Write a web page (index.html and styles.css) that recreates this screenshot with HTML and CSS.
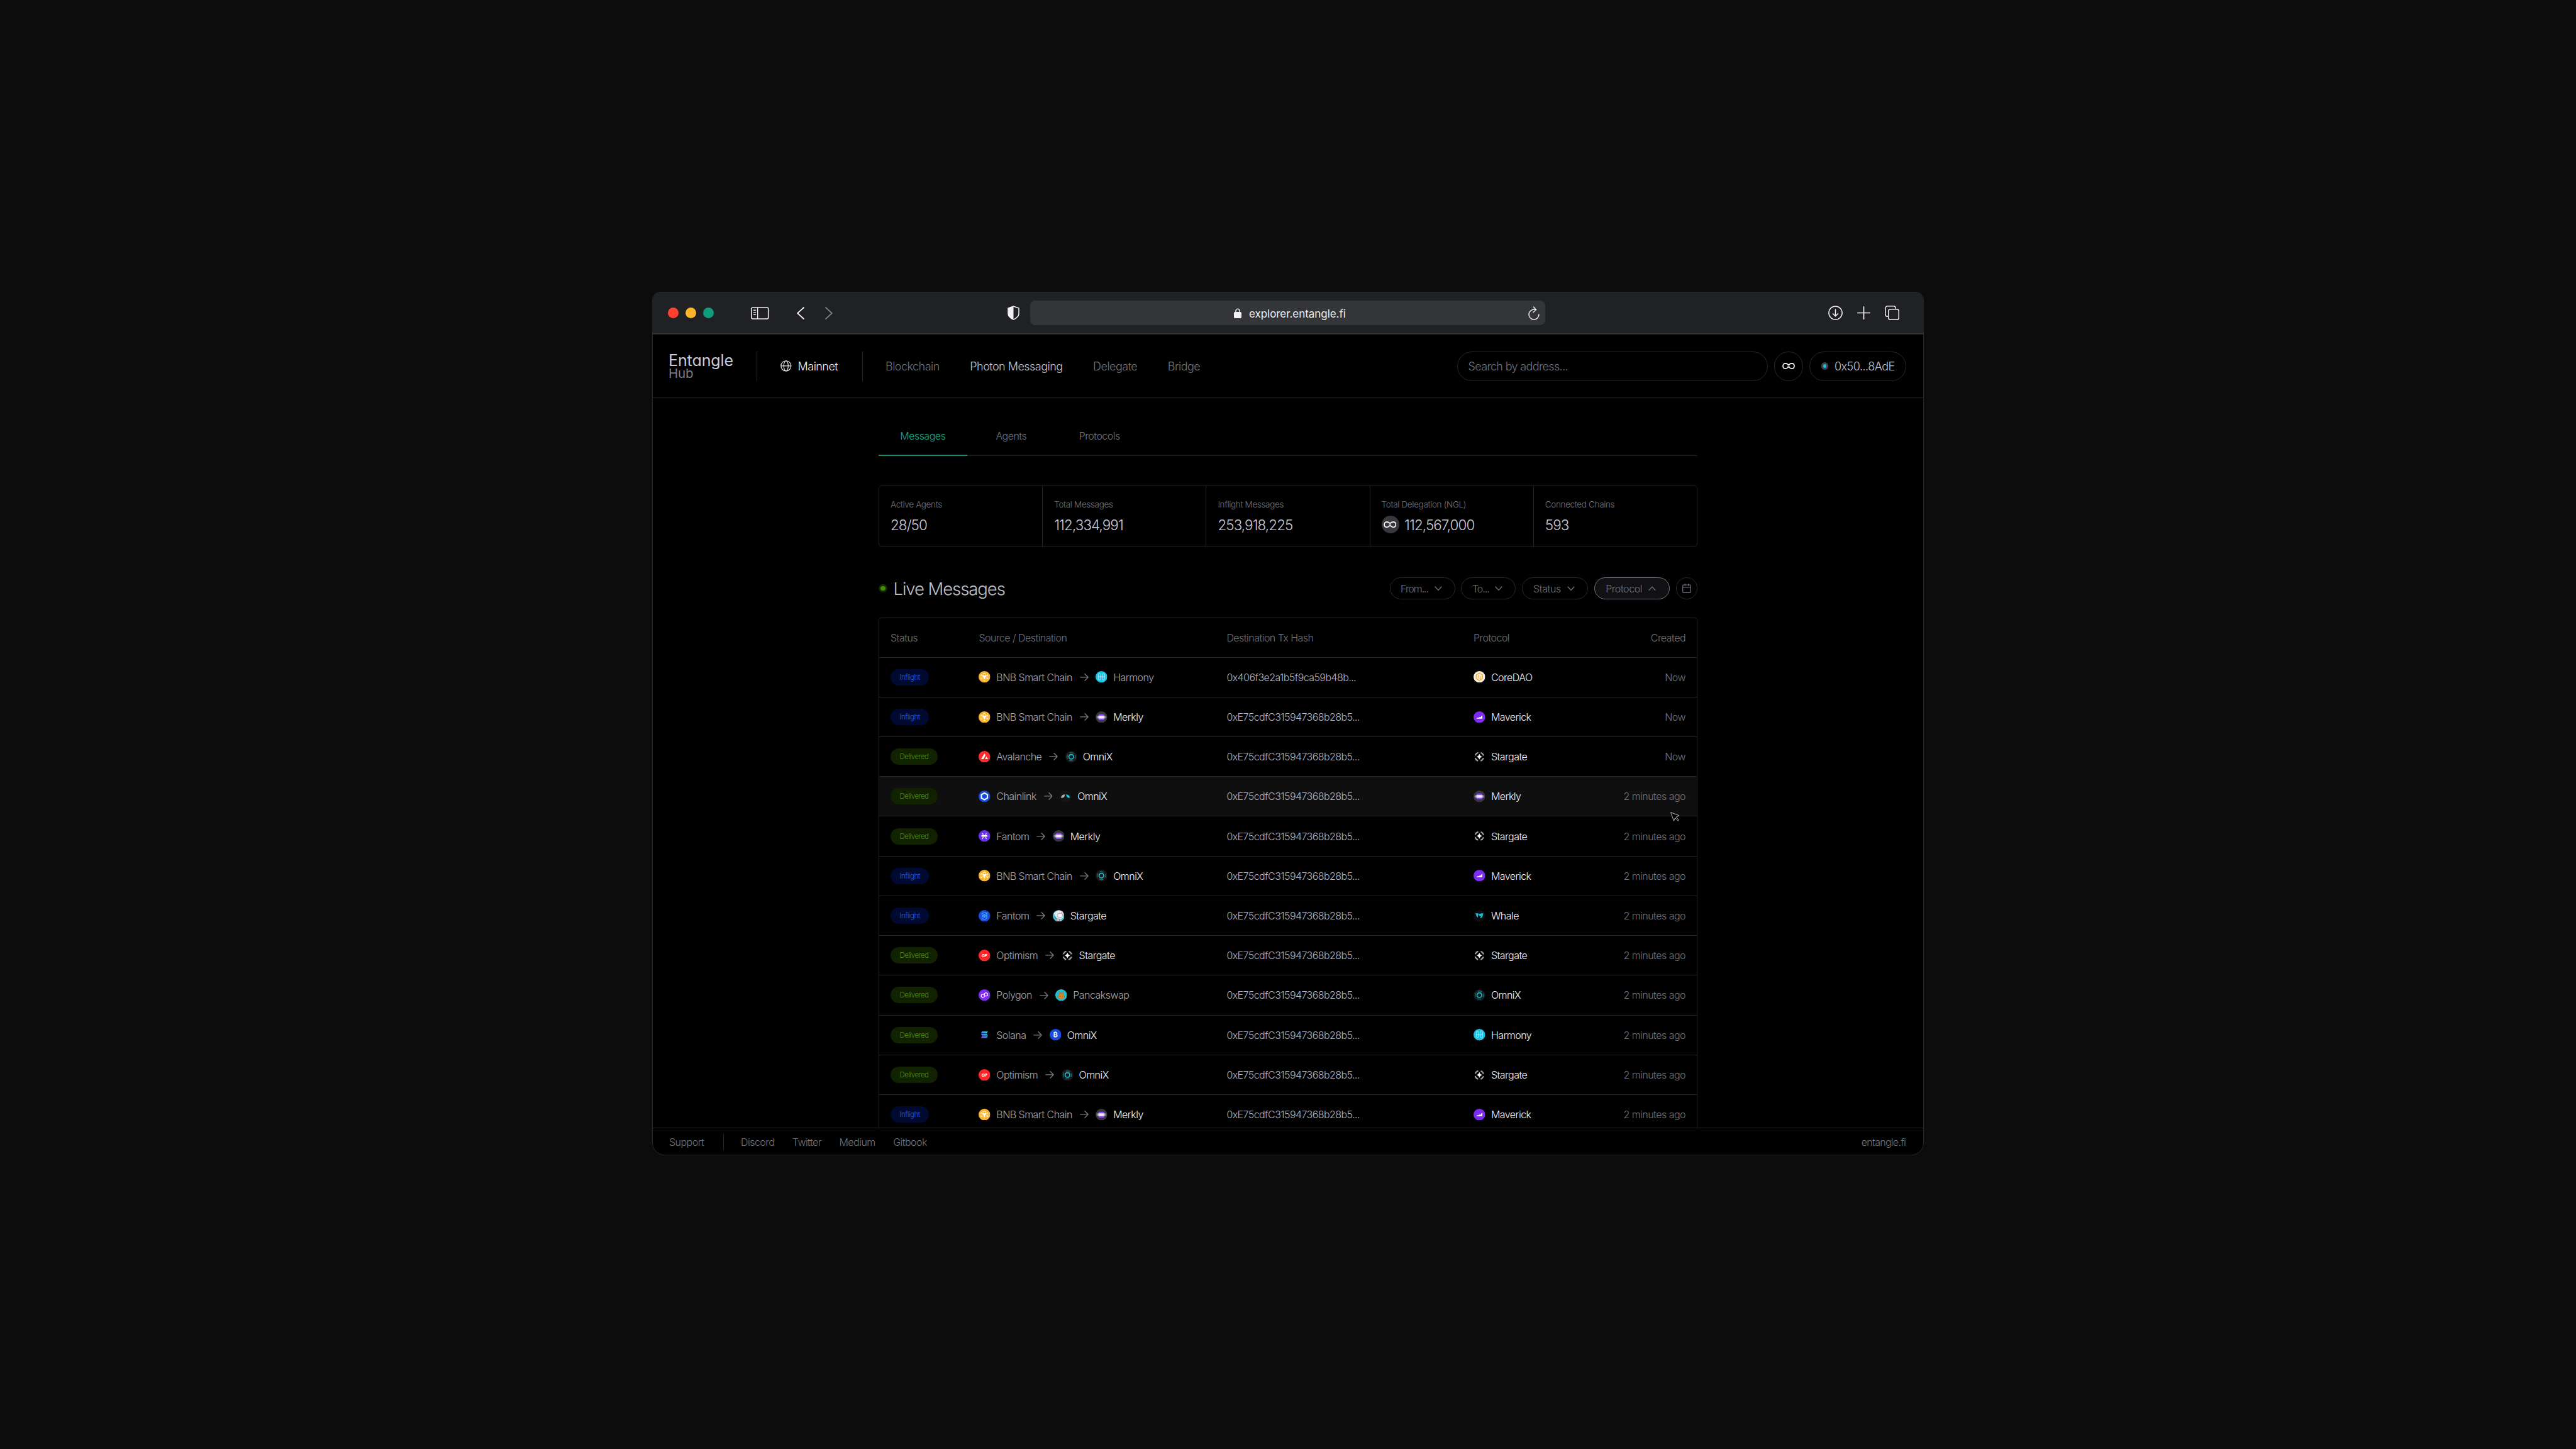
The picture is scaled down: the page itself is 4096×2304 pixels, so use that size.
FILE: index.html
```html
<!DOCTYPE html>
<html lang="en">
<head>
    <meta charset="UTF-8">
    <meta name="viewport" content="width=device-width, initial-scale=1.0">
    <title>Entangle Hub</title>
    <link rel="stylesheet" href="styles.css">
</head>
<body>

    <!-- Icon sprite -->
    <svg class="sprite" width="0" height="0">
        <defs>
            <linearGradient id="solGrad" x1="0" y1="1" x2="1" y2="0">
                <stop offset="0" stop-color="#8f35ff"/>
                <stop offset="0.5" stop-color="#3f95ea"/>
                <stop offset="1" stop-color="#14dcc0"/>
            </linearGradient>
            <linearGradient id="merklyGrad" x1="0" y1="0" x2="1" y2="0">
                <stop offset="0" stop-color="#fff" stop-opacity="0.15"/>
                <stop offset="0.35" stop-color="#fff" stop-opacity="0.9"/>
                <stop offset="0.65" stop-color="#fff" stop-opacity="0.9"/>
                <stop offset="1" stop-color="#fff" stop-opacity="0.15"/>
            </linearGradient>
        </defs>
        <symbol id="bnb" viewBox="0 0 30 30">
            <circle cx="15" cy="15" r="15" fill="#fbb42a"/>
            <g fill="none" stroke="#fff" stroke-width="1.7">
                <path d="M11 8l4-2.3L19 8M21 9.3l2.6 1.5v3M23.6 16.5v3L21 21M9 9.3l-2.6 1.5v3M6.4 16.5v3L9 21M12.5 22.8l2.5 1.3 2.5-1.3"/>
                <path d="M10 18.5v-2M20 18.5v-2"/>
            </g>
            <path d="M9.5 11.2l2.3-1.2 3.2 2 3.2-2 2.3 1.2v2.6L17 16v4l-2 1.2L13 20v-4l-3.5-2.2z" fill="#fff"/>
        </symbol>
        <symbol id="harmony" viewBox="0 0 30 30">
            <circle cx="15" cy="15" r="15" fill="#18c3e6"/>
            <g fill="none" stroke="#e6fbff" stroke-width="1.1">
                <rect x="7" y="6.5" width="6" height="16.5" rx="3"/>
                <rect x="17" y="6.5" width="6" height="16.5" rx="3"/>
                <path d="M7 15.5c5-2 10 .5 16-1.5"/>
            </g>
        </symbol>
        <symbol id="merkly" viewBox="0 0 30 30">
            <circle cx="15" cy="15" r="15" fill="#37373d"/>
            <rect x="7.5" y="7.5" width="15" height="15" rx="2.5" fill="#8a4df5"/>
            <rect x="2" y="11.5" width="26" height="7" rx="3.5" fill="url(#merklyGrad)"/>
        </symbol>
        <symbol id="omnix" viewBox="0 0 30 30">
            <circle cx="15" cy="15" r="15" fill="#19191d"/>
            <circle cx="15" cy="15" r="10.4" fill="none" stroke="#1a9c80" stroke-width="1.5" stroke-dasharray="10.3 6.04" stroke-dashoffset="5.15"/>
            <circle cx="15" cy="15" r="6" fill="none" stroke="#17c0d8" stroke-width="2.6"/>
        </symbol>
        <symbol id="omnixWing" viewBox="0 0 30 30">
            <circle cx="15" cy="15" r="15" fill="#151517"/>
            <path d="M3 18.5c1-5.5 4.5-8.5 10.5-8.5-.5 5-3 8.5-6 8.5z" fill="#a9b8ac"/>
            <path d="M15.5 10c6 0 10 3 11 8.5h-5c-3.5-1-3-5-6-8.5z" fill="#17c8dc"/>
        </symbol>
        <symbol id="avalanche" viewBox="0 0 30 30">
            <circle cx="15" cy="15" r="15" fill="#ff2a2c"/>
            <path d="M15.2 6.5l2.6 4.2-5.3 10.3H6.5zM20.2 14.3l3.8 6.7h-7.4z" fill="#fff"/>
        </symbol>
        <symbol id="chainlink" viewBox="0 0 30 30">
            <circle cx="15" cy="15" r="15" fill="#184bdf"/>
            <path d="M15 6.3l7.8 4.4v8.6L15 23.7l-7.8-4.4v-8.6z" fill="none" stroke="#fff" stroke-width="3.2"/>
        </symbol>
        <symbol id="fantomX" viewBox="0 0 30 30">
            <circle cx="15" cy="15" r="15" fill="#6a2ff0"/>
            <path d="M7.5 13.7h15M7.5 16.7h15M9.8 7.5l2.5 5M20.2 7.5l-2.5 5M12.3 17.5l-2.5 5M17.7 17.5l2.5 5" fill="none" stroke="#fff" stroke-width="1.9"/>
        </symbol>
        <symbol id="fantom" viewBox="0 0 30 30">
            <circle cx="15" cy="15" r="15" fill="#184bdf"/>
            <path d="M9 8.5l6-3.3 6 3.3v13l-6 3.3-6-3.3zM9 8.5l6 3.5 6-3.5M9 15.5l6-3.5 6 3.5-6 3.3zM15 12v6.8M7 23l3 1M21 8l2-1" fill="none" stroke="#5fd2f5" stroke-width="1.2"/>
        </symbol>
        <symbol id="astronaut" viewBox="0 0 30 30">
            <circle cx="15" cy="15" r="15" fill="#3fc3da"/>
            <path d="M3 9a15 15 0 0 1 22-5l2 8-1 8-6 3-9-2-5-4z" fill="#e9e9ec"/>
            <path d="M12 12c3-4 9-4 13-2v7c-3 3-9 3-12 1z" fill="#f8f8fa" stroke="#9a9aa5" stroke-width="1.4"/>
            <path d="M8 28a15 15 0 0 0 15-1l-2-4-11-1z" fill="#b9bac4"/>
            <path d="M23.5 5v4M11 24.5l-1 3" stroke="#ff3b36" stroke-width="1.4"/>
            <path d="M4 17l4 1M6 20l4 2M17 24v3" stroke="#5f6069" stroke-width="1.3"/>
        </symbol>
        <symbol id="optimism" viewBox="0 0 30 30">
            <circle cx="15" cy="15" r="15" fill="#ff2528"/>
            <text x="14.7" y="18.8" class="op-text" text-anchor="middle">OP</text>
        </symbol>
        <symbol id="stargate" viewBox="0 0 30 30">
            <circle cx="15" cy="15" r="11" fill="none" stroke="#a2a3ad" stroke-width="3.2" stroke-dasharray="10.8 6.48" stroke-dashoffset="-3.24"/>
            <path d="M15 8.5c1 3.5 3 5.5 6.5 6.5-3.5 1-5.5 3-6.5 6.5-1-3.5-3-5.5-6.5-6.5 3.5-1 5.5-3 6.5-6.5z" fill="#fff" stroke="#fff"/>
        </symbol>
        <symbol id="polygon" viewBox="0 0 30 30">
            <circle cx="15" cy="15" r="15" fill="#7f2bf6"/>
            <path d="M15 12.5v6.5l-4 2.3-4-2.3v-4.5l4-2.3 2.5 1.4M15 17.5V11l4-2.3 4 2.3v4.5l-4 2.3-2.5-1.4" fill="none" stroke="#fff" stroke-width="1.9"/>
        </symbol>
        <symbol id="pancake" viewBox="0 0 30 30">
            <circle cx="15" cy="15" r="15" fill="#18c3dc"/>
            <path d="M10.5 13.5C9 9 9 5.5 11 5.5s3 3 3 6.5h2c0-3.5 1-6.5 3-6.5s2 3.5.5 8c3 1.5 4 3.5 4 6 0 3.5-4 5.5-8.5 5.5s-8.5-2-8.5-5.5c0-2.5 1-4.5 4-6z" fill="#d88a2c" stroke="#7c5b3b" stroke-width=".8"/>
            <path d="M12 16.5v2.5M18 16.5v2.5" stroke="#6b4126" stroke-width="1.5"/>
        </symbol>
        <symbol id="solana" viewBox="0 0 30 30">
            <path d="M9 6.5H24l-3 4.8H6zM6 12.6h15l3 4.8H9zM9 18.6H24l-3 4.8H6z" fill="url(#solGrad)"/>
        </symbol>
        <symbol id="bitcoin" viewBox="0 0 30 30">
            <circle cx="15" cy="15" r="15" fill="#184bdf"/>
            <text x="15" y="21.3" class="btc-text" text-anchor="middle">₿</text>
        </symbol>
        <symbol id="coredao" viewBox="0 0 30 30">
            <circle cx="15" cy="15" r="15" fill="#f6f0e6"/>
            <path d="M15 5.3l8 4.6v9.6l-8 5-8-5V9.9z" fill="none" stroke="#fbaf2c" stroke-width="2.4"/>
            <path d="M12 19v-6.5l3-1.7M18.5 13.5v5.5l-3.5 2" fill="none" stroke="#fbb94a" stroke-width="1.9"/>
        </symbol>
        <symbol id="maverick" viewBox="0 0 30 30">
            <circle cx="15" cy="15" r="15" fill="#7f2bf6"/>
            <path d="M7 18.8l3-2.3h3.5l1.8-1.7 3.2.2 2.3-3.8 1.9-1.2v8.8z" fill="#fff"/>
        </symbol>
        <symbol id="whale" viewBox="0 0 30 30">
            <circle cx="15" cy="15" r="15" fill="#0b0c0d"/>
            <path d="M5 8.5h6.5l1.5 4.5-2 1.5 1 5-3.5-2zM13 8.5l3.5 2 3-2H25l-2 7.5c-1.5 4-4 5-6.5 4.500l2.500-4.500-4-1z" fill="#18c0d6"/>
        </symbol>
        <symbol id="arrow" viewBox="0 0 20 20">
            <path d="M.5 10h18M11 1.8l8 8.2-8 8.2" fill="none" stroke="currentColor" stroke-width="2"/>
        </symbol>
        <symbol id="chevron" viewBox="0 0 16 10">
            <path d="M1 1l7 7.5L15 1" fill="none" stroke="currentColor" stroke-width="1.7"/>
        </symbol>
        <symbol id="loop" viewBox="0 0 40 20">
            <path d="M20 6.5C17.5 4.5 15 1.8 10.5 1.8 5 1.8 2 5 2 10s3 8.2 8.5 8.2c4.5 0 6.5-4.7 9.5-4.7s5 4.7 9.5 4.7C35 18.2 38 15 38 10s-3-8.2-8.5-8.2C25 1.8 22.5 4.5 20 6.5z" fill="none" stroke="#fff" stroke-width="3.2"/>
            <path d="M16.5 10.2h7" stroke="#fff" stroke-width="2"/>
        </symbol>
    </svg>

    <div class="window">

        <!-- Browser bar -->
        <div class="browser-bar">
            <div class="bar-left">
                <div class="dots">
                    <span class="dot red"></span>
                    <span class="dot yellow"></span>
                    <span class="dot green"></span>
                </div>
                <svg class="sidebar-icon" viewBox="0 0 29 20" fill="none" stroke="#f0eff2">
                    <rect x=".9" y=".9" width="27.2" height="18.2" rx="2.2" stroke-width="1.6"/>
                    <path d="M10.8 1v18" stroke-width="1.4"/>
                    <path d="M4 5.2h4M4 8.6h4M4 12h4" stroke-width="1.5"/>
                </svg>
                <svg class="nav-back" viewBox="0 0 12 20" fill="none" stroke="#f5f5f7" stroke-width="1.8" stroke-linecap="round" stroke-linejoin="round"><path d="M11 1L1.2 10 11 19"/></svg>
                <svg class="nav-forward" viewBox="0 0 12 20" fill="none" stroke="#7b7c85" stroke-width="1.8" stroke-linecap="round" stroke-linejoin="round"><path d="M1 1l9.8 9L1 19"/></svg>
                <svg class="shield" viewBox="0 0 19 23">
                    <path d="M9.5 1L18 4v9c0 4.5-4 7-8.5 9.2C5 20 1 17.5 1 13V4z" fill="none" stroke="#f0eff2" stroke-width="1.5"/>
                    <path d="M9.5 1L1 4v9c0 4.5 4 7 8.5 9.2z" fill="#f0eff2"/>
                </svg>
            </div>
            <div class="address">
                <svg class="lock" viewBox="0 0 12 16">
                    <path d="M3 7V4.3a3 3.2 0 0 1 6 0V7" fill="none" stroke="#f0eff2" stroke-width="1.4"/>
                    <rect x="0" y="6" width="12" height="10" rx="1.8" fill="#f0eff2"/>
                </svg>
                <span>explorer.entangle.fi</span>
                <svg class="reload" viewBox="0 0 18 22" fill="none" stroke="#f0eff2" stroke-width="1.5" stroke-linecap="round">
                    <path d="M12.3 5.5C6 3.8 1 8 1 13a8 8 0 0 0 16 0M8.5 1l4 4.5-4.5 4"/>
                </svg>
            </div>
            <div class="bar-right">
                <svg class="bar-icon" viewBox="0 0 23 23" fill="none" stroke="#f0eff2" stroke-width="1.5" stroke-linecap="round">
                    <circle cx="11.5" cy="11.5" r="10.6"/>
                    <path d="M11.5 6v10.5M7.5 12.7l4 4 4-4"/>
                </svg>
                <svg class="bar-icon" viewBox="0 0 23 23" fill="none" stroke="#f0eff2" stroke-width="1.7" stroke-linecap="round">
                    <path d="M11.5 1.8v19.4M1.8 11.5h19.4"/>
                </svg>
                <svg class="bar-icon" viewBox="0 0 23 23" fill="none" stroke="#f0eff2" stroke-width="1.5">
                    <path d="M5.5 17.3H4a3 3 0 0 1-3-3V3.8a3 3 0 0 1 3-3h10a3 3 0 0 1 3 3v1.7"/>
                    <rect x="5.8" y="5.8" width="16.4" height="16.4" rx="2.8"/>
                </svg>
            </div>
        </div>

        <!-- App header -->
        <header class="header">
            <div class="logo">
                <div class="logo-name">Entangle</div>
                <div class="logo-sub">Hub</div>
            </div>
            <div class="network">
                <svg class="globe" viewBox="0 0 18 18" fill="none" stroke="#f0f0f5" stroke-width="1.2">
                    <circle cx="9" cy="9" r="8.2"/>
                    <ellipse cx="9" cy="9" rx="3.6" ry="8.2"/>
                    <path d="M1 9h16"/>
                </svg>
                <span>Mainnet</span>
            </div>
            <nav class="nav">
                <a>Blockchain</a>
                <a class="current">Photon Messaging</a>
                <a>Delegate</a>
                <a>Bridge</a>
            </nav>
            <div class="header-right">
                <div class="search">Search by address...</div>
                <div class="token"><svg><use href="#loop"/></svg></div>
                <div class="wallet"><span class="wallet-dot"></span>0x50...8AdE</div>
            </div>
        </header>

        <main class="content">
            <div class="tabs">
                <div class="tab active">Messages</div>
                <div class="tab">Agents</div>
                <div class="tab">Protocols</div>
            </div>

            <div class="stats">
                <div class="stat">
                    <div class="label">Active Agents</div>
                    <div class="value">28/50</div>
                </div>
                <div class="stat">
                    <div class="label">Total Messages</div>
                    <div class="value">112,334,991</div>
                </div>
                <div class="stat">
                    <div class="label">Inflight Messages</div>
                    <div class="value">253,918,225</div>
                </div>
                <div class="stat">
                    <div class="label">Total Delegation (NGL)</div>
                    <div class="value"><span class="coin"><svg><use href="#loop"/></svg></span>112,567,000</div>
                </div>
                <div class="stat">
                    <div class="label">Connected Chains</div>
                    <div class="value">593</div>
                </div>
            </div>

            <div class="live">
                <span class="live-dot"></span>
                <h1>Live Messages</h1>
                <div class="filters">
                    <div class="filter tight">From...<svg class="chevron"><use href="#chevron"/></svg></div>
                    <div class="filter tight">To...<svg class="chevron"><use href="#chevron"/></svg></div>
                    <div class="filter">Status<svg class="chevron"><use href="#chevron"/></svg></div>
                    <div class="filter open">Protocol<svg class="chevron"><use href="#chevron"/></svg></div>
                    <div class="calendar">
                        <svg viewBox="0 0 14 15" fill="none" stroke="currentColor" stroke-width="1.2">
                            <rect x=".7" y="2" width="12.6" height="12.3" rx="1.2"/>
                            <path d="M.7 6h12.6M4.2 0v3.8M9.8 0v3.8"/>
                        </svg>
                    </div>
                </div>
            </div>

            <div class="table">
                <div class="row head">
                    <div>Status</div>
                    <div>Source / Destination</div>
                    <div>Destination Tx Hash</div>
                    <div>Protocol</div>
                    <div class="time">Created</div>
                </div>
                <div class="row">
                    <div><span class="badge inflight">Inflight</span></div>
                    <div class="route"><svg class="coin-icon"><use href="#bnb"/></svg>BNB Smart Chain<svg class="arrow"><use href="#arrow"/></svg><svg class="coin-icon"><use href="#harmony"/></svg>Harmony</div>
                    <div class="hash">0x406f3e2a1b5f9ca59b48b...</div>
                    <div class="protocol"><svg class="coin-icon"><use href="#coredao"/></svg>CoreDAO</div>
                    <div class="time">Now</div>
                </div>
                <div class="row">
                    <div><span class="badge inflight">Inflight</span></div>
                    <div class="route"><svg class="coin-icon"><use href="#bnb"/></svg>BNB Smart Chain<svg class="arrow"><use href="#arrow"/></svg><svg class="coin-icon"><use href="#merkly"/></svg><b>Merkly</b></div>
                    <div class="hash">0xE75cdfC315947368b28b5...</div>
                    <div class="protocol"><svg class="coin-icon"><use href="#maverick"/></svg>Maverick</div>
                    <div class="time">Now</div>
                </div>
                <div class="row">
                    <div><span class="badge delivered">Delivered</span></div>
                    <div class="route"><svg class="coin-icon"><use href="#avalanche"/></svg>Avalanche<svg class="arrow"><use href="#arrow"/></svg><svg class="coin-icon"><use href="#omnix"/></svg><b>OmniX</b></div>
                    <div class="hash">0xE75cdfC315947368b28b5...</div>
                    <div class="protocol"><svg class="coin-icon"><use href="#stargate"/></svg>Stargate</div>
                    <div class="time">Now</div>
                </div>
                <div class="row hovered">
                    <div><span class="badge delivered">Delivered</span></div>
                    <div class="route"><svg class="coin-icon"><use href="#chainlink"/></svg>Chainlink<svg class="arrow"><use href="#arrow"/></svg><svg class="coin-icon"><use href="#omnixWing"/></svg><b>OmniX</b></div>
                    <div class="hash">0xE75cdfC315947368b28b5...</div>
                    <div class="protocol"><svg class="coin-icon"><use href="#merkly"/></svg>Merkly</div>
                    <div class="time">2 minutes ago</div>
                    <svg class="cursor" viewBox="0 0 15 15"><path d="M.7.7l13.4 5.2-5 2.3 4.6 4.7-1.3 1.3-4.7-4.6-2.3 4.7z" fill="#000" stroke="#b9bac4" stroke-width="1" stroke-linejoin="round"/></svg>
                </div>
                <div class="row">
                    <div><span class="badge delivered">Delivered</span></div>
                    <div class="route"><svg class="coin-icon"><use href="#fantomX"/></svg>Fantom<svg class="arrow"><use href="#arrow"/></svg><svg class="coin-icon"><use href="#merkly"/></svg><b>Merkly</b></div>
                    <div class="hash">0xE75cdfC315947368b28b5...</div>
                    <div class="protocol"><svg class="coin-icon"><use href="#stargate"/></svg>Stargate</div>
                    <div class="time">2 minutes ago</div>
                </div>
                <div class="row">
                    <div><span class="badge inflight">Inflight</span></div>
                    <div class="route"><svg class="coin-icon"><use href="#bnb"/></svg>BNB Smart Chain<svg class="arrow"><use href="#arrow"/></svg><svg class="coin-icon"><use href="#omnix"/></svg><b>OmniX</b></div>
                    <div class="hash">0xE75cdfC315947368b28b5...</div>
                    <div class="protocol"><svg class="coin-icon"><use href="#maverick"/></svg>Maverick</div>
                    <div class="time">2 minutes ago</div>
                </div>
                <div class="row">
                    <div><span class="badge inflight">Inflight</span></div>
                    <div class="route"><svg class="coin-icon"><use href="#fantom"/></svg>Fantom<svg class="arrow"><use href="#arrow"/></svg><svg class="coin-icon"><use href="#astronaut"/></svg><b>Stargate</b></div>
                    <div class="hash">0xE75cdfC315947368b28b5...</div>
                    <div class="protocol"><svg class="coin-icon"><use href="#whale"/></svg>Whale</div>
                    <div class="time">2 minutes ago</div>
                </div>
                <div class="row">
                    <div><span class="badge delivered">Delivered</span></div>
                    <div class="route"><svg class="coin-icon"><use href="#optimism"/></svg>Optimism<svg class="arrow"><use href="#arrow"/></svg><svg class="coin-icon"><use href="#stargate"/></svg><b>Stargate</b></div>
                    <div class="hash">0xE75cdfC315947368b28b5...</div>
                    <div class="protocol"><svg class="coin-icon"><use href="#stargate"/></svg>Stargate</div>
                    <div class="time">2 minutes ago</div>
                </div>
                <div class="row">
                    <div><span class="badge delivered">Delivered</span></div>
                    <div class="route"><svg class="coin-icon"><use href="#polygon"/></svg>Polygon<svg class="arrow"><use href="#arrow"/></svg><svg class="coin-icon"><use href="#pancake"/></svg>Pancakswap</div>
                    <div class="hash">0xE75cdfC315947368b28b5...</div>
                    <div class="protocol"><svg class="coin-icon"><use href="#omnix"/></svg>OmniX</div>
                    <div class="time">2 minutes ago</div>
                </div>
                <div class="row">
                    <div><span class="badge delivered">Delivered</span></div>
                    <div class="route"><svg class="coin-icon"><use href="#solana"/></svg>Solana<svg class="arrow"><use href="#arrow"/></svg><svg class="coin-icon"><use href="#bitcoin"/></svg><b>OmniX</b></div>
                    <div class="hash">0xE75cdfC315947368b28b5...</div>
                    <div class="protocol"><svg class="coin-icon"><use href="#harmony"/></svg>Harmony</div>
                    <div class="time">2 minutes ago</div>
                </div>
                <div class="row">
                    <div><span class="badge delivered">Delivered</span></div>
                    <div class="route"><svg class="coin-icon"><use href="#optimism"/></svg>Optimism<svg class="arrow"><use href="#arrow"/></svg><svg class="coin-icon"><use href="#omnix"/></svg><b>OmniX</b></div>
                    <div class="hash">0xE75cdfC315947368b28b5...</div>
                    <div class="protocol"><svg class="coin-icon"><use href="#stargate"/></svg>Stargate</div>
                    <div class="time">2 minutes ago</div>
                </div>
                <div class="row">
                    <div><span class="badge inflight">Inflight</span></div>
                    <div class="route"><svg class="coin-icon"><use href="#bnb"/></svg>BNB Smart Chain<svg class="arrow"><use href="#arrow"/></svg><svg class="coin-icon"><use href="#merkly"/></svg><b>Merkly</b></div>
                    <div class="hash">0xE75cdfC315947368b28b5...</div>
                    <div class="protocol"><svg class="coin-icon"><use href="#maverick"/></svg>Maverick</div>
                    <div class="time">2 minutes ago</div>
                </div>
            </div>
        </main>

        <footer class="footer">
            <div class="support">Support</div>
            <div class="links">
                <a>Discord</a>
                <a>Twitter</a>
                <a>Medium</a>
                <a>Gitbook</a>
            </div>
            <div class="site">entangle.fi</div>
        </footer>
    </div>

</body>
</html>
```
FILE: styles.css
```css
* {
    box-sizing: border-box;
}

body {
    margin: 0;
    padding-top: 464px;
    height: 2304px;
    display: flex;
    justify-content: center;
    align-items: flex-start;
    overflow: hidden;
    background-color: #0c0c0c;
    font-family: Inter, "Liberation Sans", sans-serif;
    font-weight: 300;
    font-size: 16px;
    letter-spacing: -0.033em;
    color: #72747f;
    white-space: nowrap;
}

.sprite {
    position: absolute;
}

svg {
    display: block;
    flex: none;
}

b {
    font-weight: 300;
}

.window {
    width: 2022px;
    height: 1373px;
    display: flex;
    flex-direction: column;
    overflow: hidden;
    border: 1px solid #26272b;
    border-radius: 12px 12px 20px 20px;
    background-color: #000;
}

/* Browser bar */
.browser-bar {
    flex: none;
    height: 67px;
    display: flex;
    align-items: center;
    padding-bottom: 1px;
    background-color: #202125;
    border-bottom: 1px solid #202125;
    box-shadow: inset 0 -1px #3a3b40;
}

.bar-left, .bar-right {
    display: flex;
    align-items: center;
}

.bar-left {
    width: 600px;
    padding-left: 24px;
}

.dots {
    display: flex;
    gap: 10.8px;
}

.dot {
    width: 17.3px;
    height: 17.3px;
    border-radius: 50%;
}

.red { background-color: #ff4030; }
.yellow { background-color: #fdb62b; }
.green { background-color: #109c7a; }

.sidebar-icon {
    width: 28.6px;
    height: 20px;
    margin-left: 58.5px;
}

.nav-back {
    width: 12px;
    height: 20px;
    margin-left: 44.5px;
}

.nav-forward {
    width: 12px;
    height: 20px;
    margin-left: 33px;
}

.shield {
    width: 19px;
    height: 23px;
    margin-left: auto;
    margin-right: 17px;
}

.address {
    width: 819px;
    height: 39.5px;
    display: flex;
    align-items: center;
    padding: 0 9px 0 324px;
    border-radius: 8px;
    background-color: #343539;
    color: #f0eff2;
    font-weight: 400;
    font-size: 17px;
    letter-spacing: -0.003em;
}

.address span {
    padding-top: 3px;
}

.lock {
    width: 12px;
    height: 16px;
    margin-right: 12px;
}

.reload {
    width: 18px;
    height: 22px;
    margin-left: auto;
}

.bar-right {
    flex: 1;
    justify-content: flex-end;
    gap: 22px;
    padding-right: 38px;
}

.bar-icon {
    width: 23px;
    height: 23px;
}

/* Header */
.header {
    flex: none;
    height: 101px;
    display: flex;
    align-items: center;
    padding: 0 27px 0 25px;
    border-bottom: 1px solid #212125;
    font-size: 18px;
}

.logo {
    width: 141px;
    height: 47px;
    border-right: 1px solid #26262a;
    font-weight: 400;
    font-feature-settings: "cv11";
}

.logo-name {
    font-size: 25px;
    line-height: 28px;
    letter-spacing: -0.004em;
    color: #c9cad7;
}

.logo-sub {
    margin-top: -4px;
    font-size: 20.5px;
    line-height: 22px;
    letter-spacing: -0.01em;
    color: #7d7e89;
}

.network {
    width: 167.5px;
    height: 47px;
    display: flex;
    align-items: center;
    gap: 10px;
    padding-left: 37px;
    border-right: 1px solid #26262a;
    color: #f5f5fa;
}

.globe {
    width: 17.6px;
    height: 17.6px;
}

.nav {
    display: flex;
    gap: 48.5px;
    padding-left: 36.5px;
}

.current {
    color: #c6c7d3;
}

.header-right {
    display: flex;
    gap: 10px;
    margin-left: auto;
}

.search, .token, .wallet {
    height: 47px;
    display: flex;
    align-items: center;
    border: 1px solid #27282c;
    border-radius: 24px;
}

.search {
    width: 494px;
    padding-left: 17px;
    letter-spacing: -0.036em;
}

.token {
    width: 46.5px;
    justify-content: center;
}

.token svg {
    width: 20px;
    height: 10px;
}

.wallet {
    width: 154px;
    gap: 10px;
    padding-left: 17.5px;
    color: #c0c1cd;
}

.wallet-dot {
    width: 11.5px;
    height: 11.5px;
    border: 3px solid #3c4146;
    border-radius: 50%;
    background-color: #17c2e2;
}

/* Content */
.content {
    flex: 1;
    min-height: 0;
    width: 1302px;
    margin: 0 auto;
    overflow: hidden;
}

.tabs {
    height: 63px;
    display: flex;
    margin-top: 29px;
    border-bottom: 1px solid #212125;
}

.tab {
    width: 140.5px;
    height: 63px;
    display: flex;
    align-items: center;
    justify-content: center;
    border-bottom: 2px solid transparent;
}

.tab.active {
    color: #16ad8a;
    border-color: #158a72;
}

.stats {
    height: 98px;
    display: flex;
    margin-top: 47px;
    border: 1px solid #232327;
    border-radius: 5px;
}

.stat {
    flex: 1;
    padding: 21px 0 0 18px;
    border-left: 1px solid #232327;
}

.stat:first-child {
    border-left: none;
}

.label {
    font-size: 13.5px;
    line-height: 16px;
    letter-spacing: -0.026em;
}

.value {
    display: flex;
    align-items: center;
    height: 28px;
    margin-top: 10px;
    font-size: 22.4px;
    letter-spacing: -0.04em;
    color: #c8c9d6;
}

.coin {
    width: 28px;
    height: 28px;
    display: flex;
    align-items: center;
    justify-content: center;
    margin-right: 8.5px;
    border-radius: 50%;
    background-color: #37383d;
}

.coin svg {
    width: 20.5px;
    height: 10.2px;
}

.live {
    display: flex;
    align-items: center;
    margin-top: 48px;
    height: 35px;
}

.live-dot {
    width: 13.5px;
    height: 13.5px;
    border: 3px solid #142a02;
    border-radius: 50%;
    background-color: #438c0a;
}

h1 {
    margin: 0 0 0 10px;
    font-weight: 300;
    font-size: 27.5px;
    letter-spacing: -0.039em;
    color: #bfc0cc;
}

.filters {
    display: flex;
    gap: 9.9px;
    margin-left: auto;
}

.filter, .calendar {
    height: 35px;
    display: flex;
    align-items: center;
    border: 1px solid #28292d;
    border-radius: 18px;
}

.filter {
    gap: 10px;
    padding: 0 20.5px 0 17px;
    letter-spacing: -0.026em;
}

.filter.tight {
    gap: 9.5px;
    padding: 0 20px 0 16.5px;
    letter-spacing: -0.066em;
}

.filter.open {
    background-color: #111113;
    border-color: #72747f;
}

.chevron {
    width: 12px;
    height: 7.5px;
}

.open .chevron {
    transform: rotate(180deg);
}

.calendar {
    width: 34.5px;
    justify-content: center;
}

.calendar svg {
    width: 14px;
    height: 15px;
}

/* Messages table */
.table {
    margin-top: 29px;
    border: 1px solid #242428;
    border-radius: 5px 5px 0 0;
}

.row {
    position: relative;
    display: grid;
    grid-template-columns: 140.4px 394px 392.6px 1fr 130px;
    align-items: center;
    height: 63.24px;
    padding: 0 18px;
    border-bottom: 1px solid #242428;
}

.row.head {
    height: 62.5px;
}

.row.hovered {
    background-color: #0f0f0f;
}

.badge {
    display: inline-flex;
    align-items: center;
    height: 26px;
    padding: 0 14.5px;
    border-radius: 13px;
    font-size: 11.5px;
    letter-spacing: -0.045em;
}

.inflight {
    color: #2f58e0;
    background-color: #000a30;
}

.delivered {
    color: #45960c;
    background-color: #102200;
}

.route, .protocol {
    display: flex;
    align-items: center;
}

.route {
    color: #a6a7b2;
}

.coin-icon {
    width: 18.6px;
    height: 18.6px;
    margin-right: 9.3px;
}

.arrow {
    width: 13.8px;
    height: 13.8px;
    margin: 0 11.8px;
    color: #777883;
}

.hash {
    color: #b3b4c0;
    letter-spacing: -0.036em;
}

.route b, .protocol {
    color: #f5f5fa;
}

.time {
    text-align: right;
}

.op-text {
    font-weight: 800;
    font-style: italic;
    font-size: 10px;
    letter-spacing: 0;
    fill: #fff;
}

.btc-text {
    font-weight: 700;
    font-size: 17px;
    letter-spacing: 0;
    fill: #fff;
}

.cursor {
    position: absolute;
    left: 1258px;
    top: 56px;
    z-index: 1;
    width: 15px;
    height: 15px;
}

/* Footer */
.footer {
    flex: none;
    height: 43px;
    display: flex;
    align-items: center;
    padding: 1px 28px 0 26px;
    border-top: 1px solid #252529;
}

.support {
    width: 87px;
    height: 26px;
    line-height: 26px;
    border-right: 1px solid #26262a;
}

.links {
    display: flex;
    gap: 28.4px;
    padding-left: 27px;
}

.site {
    margin-left: auto;
    letter-spacing: -0.045em;
}
```
